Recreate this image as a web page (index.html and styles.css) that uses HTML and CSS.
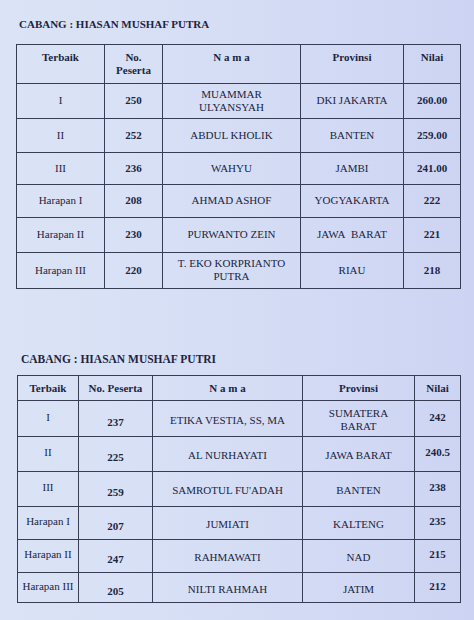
FILE: index.html
```html
<!DOCTYPE html>
<html lang="id">
<head>
<meta charset="utf-8">
<title>Hiasan Mushaf</title>
<link rel="stylesheet" href="styles.css">
</head>
<body>
<div class="page">
  <section class="cabang cabang-putra">
    <h2 class="judul">CABANG : HIASAN MUSHAF PUTRA</h2>
    <table class="hasil t1">
      <colgroup>
        <col class="c1"><col class="c2"><col class="c3"><col class="c4"><col class="c5">
      </colgroup>
      <thead>
        <tr class="h"><th>Terbaik</th><th>No.<br>Peserta</th><th>N a m a</th><th>Provinsi</th><th>Nilai</th></tr>
      </thead>
      <tbody>
        <tr class="r1"><td>I</td><td class="b">250</td><td>MUAMMAR<br>ULYANSYAH</td><td>DKI JAKARTA</td><td class="b">260.00</td></tr>
        <tr class="r2"><td>II</td><td class="b">252</td><td>ABDUL KHOLIK</td><td>BANTEN</td><td class="b">259.00</td></tr>
        <tr class="r3"><td>III</td><td class="b">236</td><td>WAHYU</td><td>JAMBI</td><td class="b">241.00</td></tr>
        <tr class="r4"><td>Harapan I</td><td class="b">208</td><td>AHMAD ASHOF</td><td>YOGYAKARTA</td><td class="b">222</td></tr>
        <tr class="r5"><td>Harapan II</td><td class="b">230</td><td>PURWANTO ZEIN</td><td>JAWA&nbsp; BARAT</td><td class="b">221</td></tr>
        <tr class="r6"><td>Harapan III</td><td class="b">220</td><td>T. EKO KORPRIANTO<br>PUTRA</td><td>RIAU</td><td class="b">218</td></tr>
      </tbody>
    </table>
  </section>

  <section class="cabang cabang-putri">
    <h2 class="judul">CABANG : HIASAN MUSHAF PUTRI</h2>
    <table class="hasil t2">
      <colgroup>
        <col class="c1"><col class="c2"><col class="c3"><col class="c4"><col class="c5">
      </colgroup>
      <thead>
        <tr class="h"><th>Terbaik</th><th>No. Peserta</th><th>N a m a</th><th>Provinsi</th><th>Nilai</th></tr>
      </thead>
      <tbody>
        <tr class="r1"><td class="up">I</td><td class="b low">237</td><td>ETIKA VESTIA, SS, MA</td><td>SUMATERA<br>BARAT</td><td class="b up">242</td></tr>
        <tr class="r2"><td class="up">II</td><td class="b low">225</td><td>AL NURHAYATI</td><td>JAWA BARAT</td><td class="b up">240.5</td></tr>
        <tr class="r3"><td class="up">III</td><td class="b low">259</td><td>SAMROTUL FU'ADAH</td><td>BANTEN</td><td class="b up">238</td></tr>
        <tr class="r4"><td class="up">Harapan I</td><td class="b low">207</td><td>JUMIATI</td><td>KALTENG</td><td class="b up">235</td></tr>
        <tr class="r5"><td class="up">Harapan II</td><td class="b low">247</td><td>RAHMAWATI</td><td>NAD</td><td class="b up">215</td></tr>
        <tr class="r6"><td class="up">Harapan III</td><td class="b low">205</td><td>NILTI RAHMAH</td><td>JATIM</td><td class="b up">212</td></tr>
      </tbody>
    </table>
  </section>
</div>
</body>
</html>
```

FILE: styles.css
```css
html, body {
  margin: 0;
  padding: 0;
}
body {
  width: 474px;
  height: 620px;
  overflow: hidden;
  background: linear-gradient(90deg, #dbe4f5 0%, #d6def5 45%, #cdd4f3 100%);
  font-family: "Liberation Serif", "Times New Roman", Tinos, "DejaVu Serif", serif;
  color: #20253f;
}
.page {
  display: flex;
  flex-direction: column;
  padding: 0 14px 0 16px;
}
.judul {
  margin: 0;
  font-size: 11px;
  font-weight: bold;
  line-height: 14px;
  color: #1f2440;
}
.cabang-putra .judul {
  padding: 17px 0 0 3px;
}
.cabang-putra .hasil {
  margin-top: 13px;
}
.cabang-putri .judul {
  padding: 63px 0 0 5px;
  font-size: 11.5px;
}
.cabang-putri .hasil {
  margin-top: 9px;
  margin-left: 1px;
}
.hasil {
  border-collapse: collapse;
  table-layout: fixed;
  width: 444px;
  font-size: 11px;
  line-height: 13px;
}
.hasil th,
.hasil td {
  border: 1.2px solid #383d55;
  text-align: center;
  padding: 0 2px;
}
.hasil th {
  vertical-align: top;
  font-weight: bold;
  padding-top: 6px;
}
.hasil td {
  vertical-align: middle;
  padding-bottom: 1px;
}
.hasil td.b {
  font-weight: bold;
}

.t1 .c1 { width: 88px; }
.t1 .c2 { width: 58px; }
.t1 .c3 { width: 138px; }
.t1 .c4 { width: 103px; }
.t1 .c5 { width: 57px; }
.t1 .h { height: 39px; }
.t1 .r1 { height: 35px; }
.t1 .r2 { height: 34px; }
.t1 .r3 { height: 32px; }
.t1 .r4 { height: 33px; }
.t1 .r5 { height: 35px; }
.t1 .r6 { height: 36px; }

.t2 { width: 443px; }
.t2 .c1 { width: 61px; }
.t2 .c2 { width: 74px; }
.t2 .c3 { width: 150px; }
.t2 .c4 { width: 112px; }
.t2 .c5 { width: 46px; }
.t2 th { vertical-align: middle; padding-top: 1px; }
.t2 .h { height: 25px; }
.t2 .r1 { height: 36px; }
.t2 .r2 { height: 35px; }
.t2 .r3 { height: 35px; }
.t2 .r4 { height: 33px; }
.t2 .r5 { height: 33px; }
.t2 .r6 { height: 30px; }
.t2 td { padding-top: 3px; padding-bottom: 0; }
.t2 td.up { padding-top: 0; padding-bottom: 3px; }
.t2 td.low { padding-top: 7px; padding-bottom: 0; }
```
